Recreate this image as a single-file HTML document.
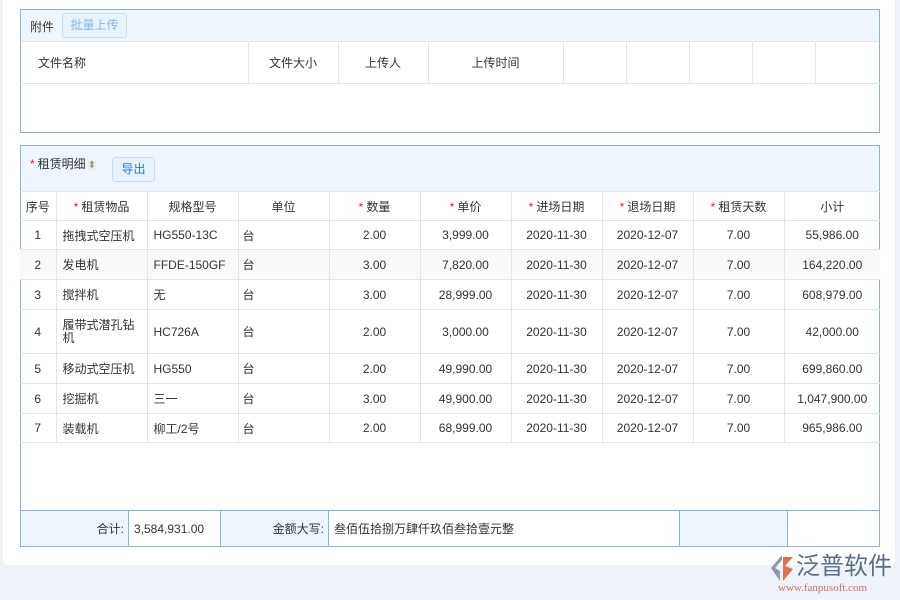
<!DOCTYPE html>
<html><head><meta charset="utf-8"><style>
*{box-sizing:border-box;margin:0;padding:0}
body{width:900px;height:600px;background:#eef3fa;font-family:"Liberation Sans","Noto Sans CJK SC",sans-serif;font-size:12px;color:#333;position:relative;overflow:hidden}
.panel{position:absolute;left:3px;top:0;width:892px;height:565px;background:#fff;border-radius:0 0 4px 4px}
.box{position:absolute;border:1px solid #8fb4c8;background:#fff}
.a{position:absolute}
table{border-collapse:collapse;position:absolute;table-layout:fixed}
td,th{border:1px solid #e2e6ea;font-weight:normal;white-space:nowrap;overflow:hidden}
.req{color:#e02020;font-size:12px;margin-right:3px}
.btn{position:absolute;border:1px solid #c6dcef;background:#e8f2fc;border-radius:3px;text-align:center}
.f{display:flex;align-items:center;height:100%}
</style></head><body>
<div class="panel"></div>
<div class="box" style="left:20px;top:9px;width:860px;height:124px">
  <div class="a" style="left:0;top:0;width:858px;height:32px;background:#eef5fd;border-bottom:1px solid #e2e6ea"></div>
  <div class="a" style="left:9px;top:8px">附件</div>
  <div class="btn" style="left:41px;top:3px;width:65px;height:25px;line-height:23px;color:#8ab8e0">批量上传</div>
  <table style="left:-1px;top:32px;width:860px">
   <tr style="height:41px"><td style="width:228px;padding-left:18px;border-left:0;border-top:0">文件名称</td><td style="width:90px;text-align:center;border-top:0">文件大小</td><td style="width:90px;text-align:center;border-top:0">上传人</td><td style="width:135px;text-align:center;border-top:0">上传时间</td><td style="width:63px;border-top:0"></td><td style="width:63px;border-top:0"></td><td style="width:63px;border-top:0"></td><td style="width:63px;border-top:0"></td><td style="border-top:0;border-right:0"></td></tr>
  </table>
</div>
<div class="box" style="left:20px;top:145px;width:860px;height:402px">
  <div class="a" style="left:0;top:0;width:858px;height:45px;background:#eef5fd"></div>
  <div class="a" style="left:9px;top:9px"><span class="req">*</span>租赁明细<span style="color:#999;background:#eee;font-size:10px;margin-left:2px">⬍</span></div>
  <div class="btn" style="left:91px;top:11px;width:43px;height:25px;line-height:23px;color:#2a7fc4">导出</div>
  <table style="left:-1px;top:45px;width:860px;text-align:center">
   <colgroup><col style="width:36px"><col style="width:91px"><col style="width:91px"><col style="width:91px"><col style="width:91px"><col style="width:91px"><col style="width:91px"><col style="width:91px"><col style="width:91px"><col></colgroup>
   <tr style="height:29px"><td style="border-left:0">序号</td><td><span class="req">*</span>租赁物品</td><td>规格型号</td><td>单位</td><td><span class="req">*</span>数量</td><td><span class="req">*</span>单价</td><td><span class="req">*</span>进场日期</td><td><span class="req">*</span>退场日期</td><td><span class="req">*</span>租赁天数</td><td style="border-right:0">小计</td></tr>
   <tr style="height:29px"><td style="border-left:0">1</td><td style="text-align:left;padding-left:6px">拖拽式空压机</td><td style="text-align:left;padding-left:6px">HG550-13C</td><td style="text-align:left;padding-left:4px">台</td><td>2.00</td><td>3,999.00</td><td>2020-11-30</td><td>2020-12-07</td><td>7.00</td><td style="border-right:0">55,986.00</td></tr>
   <tr style="height:30px;background:#fafafa"><td style="border-left:0">2</td><td style="text-align:left;padding-left:6px">发电机</td><td style="text-align:left;padding-left:6px">FFDE-150GF</td><td style="text-align:left;padding-left:4px">台</td><td>3.00</td><td>7,820.00</td><td>2020-11-30</td><td>2020-12-07</td><td>7.00</td><td style="border-right:0">164,220.00</td></tr>
   <tr style="height:30px"><td style="border-left:0">3</td><td style="text-align:left;padding-left:6px">搅拌机</td><td style="text-align:left;padding-left:6px">无</td><td style="text-align:left;padding-left:4px">台</td><td>3.00</td><td>28,999.00</td><td>2020-11-30</td><td>2020-12-07</td><td>7.00</td><td style="border-right:0">608,979.00</td></tr>
   <tr style="height:44px"><td style="border-left:0">4</td><td style="text-align:left;padding:0 8px 0 6px;white-space:normal;word-break:break-all;line-height:13px">履带式潜孔钻机</td><td style="text-align:left;padding-left:6px">HC726A</td><td style="text-align:left;padding-left:4px">台</td><td>2.00</td><td>3,000.00</td><td>2020-11-30</td><td>2020-12-07</td><td>7.00</td><td style="border-right:0">42,000.00</td></tr>
   <tr style="height:30px"><td style="border-left:0">5</td><td style="text-align:left;padding-left:6px">移动式空压机</td><td style="text-align:left;padding-left:6px">HG550</td><td style="text-align:left;padding-left:4px">台</td><td>2.00</td><td>49,990.00</td><td>2020-11-30</td><td>2020-12-07</td><td>7.00</td><td style="border-right:0">699,860.00</td></tr>
   <tr style="height:30px"><td style="border-left:0">6</td><td style="text-align:left;padding-left:6px">挖掘机</td><td style="text-align:left;padding-left:6px">三一</td><td style="text-align:left;padding-left:4px">台</td><td>3.00</td><td>49,900.00</td><td>2020-11-30</td><td>2020-12-07</td><td>7.00</td><td style="border-right:0">1,047,900.00</td></tr>
   <tr style="height:29px"><td style="border-left:0">7</td><td style="text-align:left;padding-left:6px">装载机</td><td style="text-align:left;padding-left:6px">柳工/2号</td><td style="text-align:left;padding-left:4px">台</td><td>2.00</td><td>68,999.00</td><td>2020-11-30</td><td>2020-12-07</td><td>7.00</td><td style="border-right:0">965,986.00</td></tr>
  </table>
  <div class="a" style="left:0;top:364px;width:858px;height:36px;border-top:1px solid #8fb4c8;display:flex">
   <div class="f" style="width:108px;background:#eef6fd;justify-content:flex-end;padding-right:4px;border-right:1px solid #8fb4c8">合计:</div>
   <div class="f" style="width:92px;padding-left:5px;border-right:1px solid #8fb4c8">3,584,931.00</div>
   <div class="f" style="width:108px;background:#eef6fd;justify-content:flex-end;padding-right:4px;border-right:1px solid #8fb4c8">金额大写:</div>
   <div class="f" style="width:351px;padding-left:5px;border-right:1px solid #8fb4c8">叁佰伍拾捌万肆仟玖佰叁拾壹元整</div>
   <div style="width:108px;background:#eef6fd;border-right:1px solid #8fb4c8"></div>
   <div style="flex:1"></div>
  </div>
</div>
<div class="a" style="left:769px;top:554px;width:26px;height:28px">
 <svg width="26" height="28" viewBox="0 0 26 28"><path d="M13 1 L2 14 L11 27 L11 17 L6 14 L13 6Z" fill="#8a9bb0"/><path d="M14 3 L24 3 L16 12 L24 15 L14 27Z" fill="#e07050"/></svg>
</div>
<div class="a" style="left:796px;top:553px;font-size:24px;line-height:28px;color:#5a6e88;letter-spacing:0px">泛普软件</div>
<div class="a" style="left:778px;top:582px;font-size:11px;line-height:12px;color:#d07060;font-family:'Liberation Serif',serif">www.fanpusoft.com</div>
</body></html>
